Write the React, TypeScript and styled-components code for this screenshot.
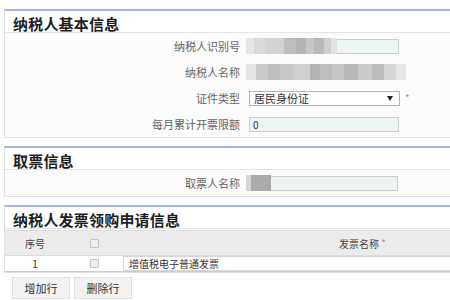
import React from 'react';
import styled, { createGlobalStyle } from 'styled-components';

const GlobalStyle = createGlobalStyle`
  html, body {
    margin: 0;
    padding: 0;
    background: #fff;
    overflow: hidden;
  }
  body {
    font-family: "Noto Sans CJK SC", "Liberation Sans", sans-serif;
    color: #333;
  }
`;

type Block = [number, string];

const Page = styled.div`
  width: 446px;
  padding: 9px 0 0 4px;
  display: flex;
  flex-direction: column;
  gap: 8px;
`;

const Panel = styled.section`
  border: 1px solid #e1e1e1;
  border-right: none;
  border-top: 2px solid #a3b5e6;
  background: #fbfbfc;
`;

const PanelHead = styled.h2`
  margin: 0;
  height: 22px;
  padding: 3px 0 0 8px;
  box-sizing: border-box;
  background: #fff;
  border-bottom: 1px solid #e4e4e4;
  font-size: 15px;
  line-height: 20px;
  font-weight: bold;
  color: #1e1e1e;
  letter-spacing: 0.2px;
`;

const FormRow = styled.div`
  display: grid;
  grid-template-columns: 239px 1fr;
  align-items: center;
  height: 26px;
`;

const Label = styled.label`
  text-align: right;
  font-size: 11px;
  color: #666;
  padding-right: 4px;
  white-space: nowrap;
`;

const Field = styled.div`
  position: relative;
  display: flex;
  align-items: center;
  gap: 5px;
  height: 16px;
`;

const TextBox = styled.div<{ $indent?: number }>`
  width: 150px;
  height: 15px;
  margin-left: ${(p) => p.$indent ?? 4}px;
  box-sizing: border-box;
  border: 1px solid #c9cfcf;
  background: #eef3f3;
  font-size: 10px;
  line-height: 13px;
  padding-left: 3px;
  color: #333;
`;

const Select = styled.div`
  width: 151px;
  height: 15px;
  margin-left: 5px;
  box-sizing: border-box;
  border: 1px solid #b5b5b5;
  background: #fff;
  display: flex;
  align-items: center;
  justify-content: space-between;
  padding: 0 6px 0 4px;
  font-size: 11px;
  color: #333;
`;

const Arrow = styled.span`
  width: 0;
  height: 0;
  border-left: 3px solid transparent;
  border-right: 3px solid transparent;
  border-top: 5px solid #222;
`;

const Required = styled.span`
  color: #e27a7a;
  font-size: 10px;
  line-height: 10px;
`;

const Mosaic = styled.div<{ $left: number }>`
  position: absolute;
  left: ${(p) => p.$left}px;
  top: 0;
  display: flex;
  height: 16px;
`;

const Tile = styled.span<{ $w: number; $c: string }>`
  width: ${(p) => p.$w}px;
  background: ${(p) => p.$c};
`;

const Blur = ({ blocks, left = 2 }: { blocks: Block[]; left?: number }) => (
  <Mosaic $left={left}>
    {blocks.map(([w, c], i) => (
      <Tile key={i} $w={w} $c={c} />
    ))}
  </Mosaic>
);

const TableHead = styled.div`
  display: grid;
  grid-template-columns: 60px 58px 1fr;
  align-items: center;
  height: 24px;
  margin-top: 1px;
  background: #ececec;
  border-top: 1px solid #dcdcdc;
  border-bottom: 1px solid #dcdcdc;
  font-size: 10px;
  color: #444;
  text-align: center;
`;

const TableRow = styled.div`
  display: grid;
  grid-template-columns: 60px 58px 1fr;
  align-items: center;
  height: 15px;
  border-bottom: 1px solid #c3cbe2;
  background: #fff;
  font-size: 10px;
  color: #333;
  text-align: center;
`;

const Cell = styled.div<{ $pad?: number }>`
  display: flex;
  justify-content: ${(p) => (p.$pad ? 'flex-start' : 'center')};
  padding-left: ${(p) => p.$pad ?? 0}px;
  align-items: center;
`;

const Check = styled.span`
  width: 9px;
  height: 9px;
  box-sizing: border-box;
  border: 1px solid #c4c4c4;
  border-radius: 1px;
  background: #efefef;
`;

const RowInput = styled.div`
  height: 15px;
  box-sizing: border-box;
  border: 1px solid #d6d6d6;
  border-right: none;
  background: #fff;
  text-align: left;
  padding-left: 5px;
  font-size: 10px;
  line-height: 13px;
`;

const Buttons = styled.div`
  display: flex;
  gap: 4px;
  padding: 4px 0 0 8px;
`;

const Button = styled.button`
  width: 58px;
  height: 22px;
  border: 1px solid #e0e0e0;
  background: #f2f2f2;
  font-family: inherit;
  font-size: 11px;
  color: #333;
  padding: 0;
`;

const idBlur: Block[] = [
  [8, '#e6e6e6'], [12, '#d9d9d9'], [18, '#d3d3d3'], [12, '#bdbdbd'],
  [10, '#b4b4b4'], [8, '#c6c6c6'], [10, '#b9b9b9'], [7, '#d0d0d0'], [6, '#e2e2e2'],
];

const nameBlur: Block[] = [
  [10, '#e4e4e4'], [12, '#cacaca'], [12, '#bdbdbd'], [14, '#c9c9c9'],
  [16, '#d1d1d1'], [10, '#b2b2b2'], [12, '#bebebe'], [12, '#c6c6c6'],
  [14, '#b9b9b9'], [14, '#cacaca'], [12, '#bcbcbc'], [12, '#d5d5d5'], [10, '#e8e8e8'],
];

const pickBlur: Block[] = [[5, '#d6d6d6'], [20, '#ababab']];

export default function App() {
  return (
    <>
      <GlobalStyle />
      <Page>
        <Panel>
          <PanelHead>纳税人基本信息</PanelHead>
          <FormRow>
            <Label>纳税人识别号</Label>
            <Field>
              <TextBox $indent={5} />
              <Blur blocks={idBlur} />
            </Field>
          </FormRow>
          <FormRow>
            <Label>纳税人名称</Label>
            <Field>
              <Blur blocks={nameBlur} />
            </Field>
          </FormRow>
          <FormRow>
            <Label>证件类型</Label>
            <Field>
              <Select>
                居民身份证
                <Arrow />
              </Select>
              <Required>*</Required>
            </Field>
          </FormRow>
          <FormRow>
            <Label>每月累计开票限额</Label>
            <Field>
              <TextBox $indent={5}>0</TextBox>
            </Field>
          </FormRow>
        </Panel>

        <Panel>
          <PanelHead>取票信息</PanelHead>
          <FormRow>
            <Label>取票人名称</Label>
            <Field>
              <TextBox $indent={4} />
              <Blur blocks={pickBlur} />
            </Field>
          </FormRow>
        </Panel>

        <div>
          <Panel>
            <PanelHead>纳税人发票领购申请信息</PanelHead>
            <TableHead>
              <Cell>序号</Cell>
              <Cell>
                <Check />
              </Cell>
              <Cell $pad={216}>
                发票名称&nbsp;<Required>*</Required>
              </Cell>
            </TableHead>
            <TableRow>
              <Cell>1</Cell>
              <Cell>
                <Check />
              </Cell>
              <RowInput>增值税电子普通发票</RowInput>
            </TableRow>
          </Panel>
          <Buttons>
            <Button>增加行</Button>
            <Button>删除行</Button>
          </Buttons>
        </div>
      </Page>
    </>
  );
}
